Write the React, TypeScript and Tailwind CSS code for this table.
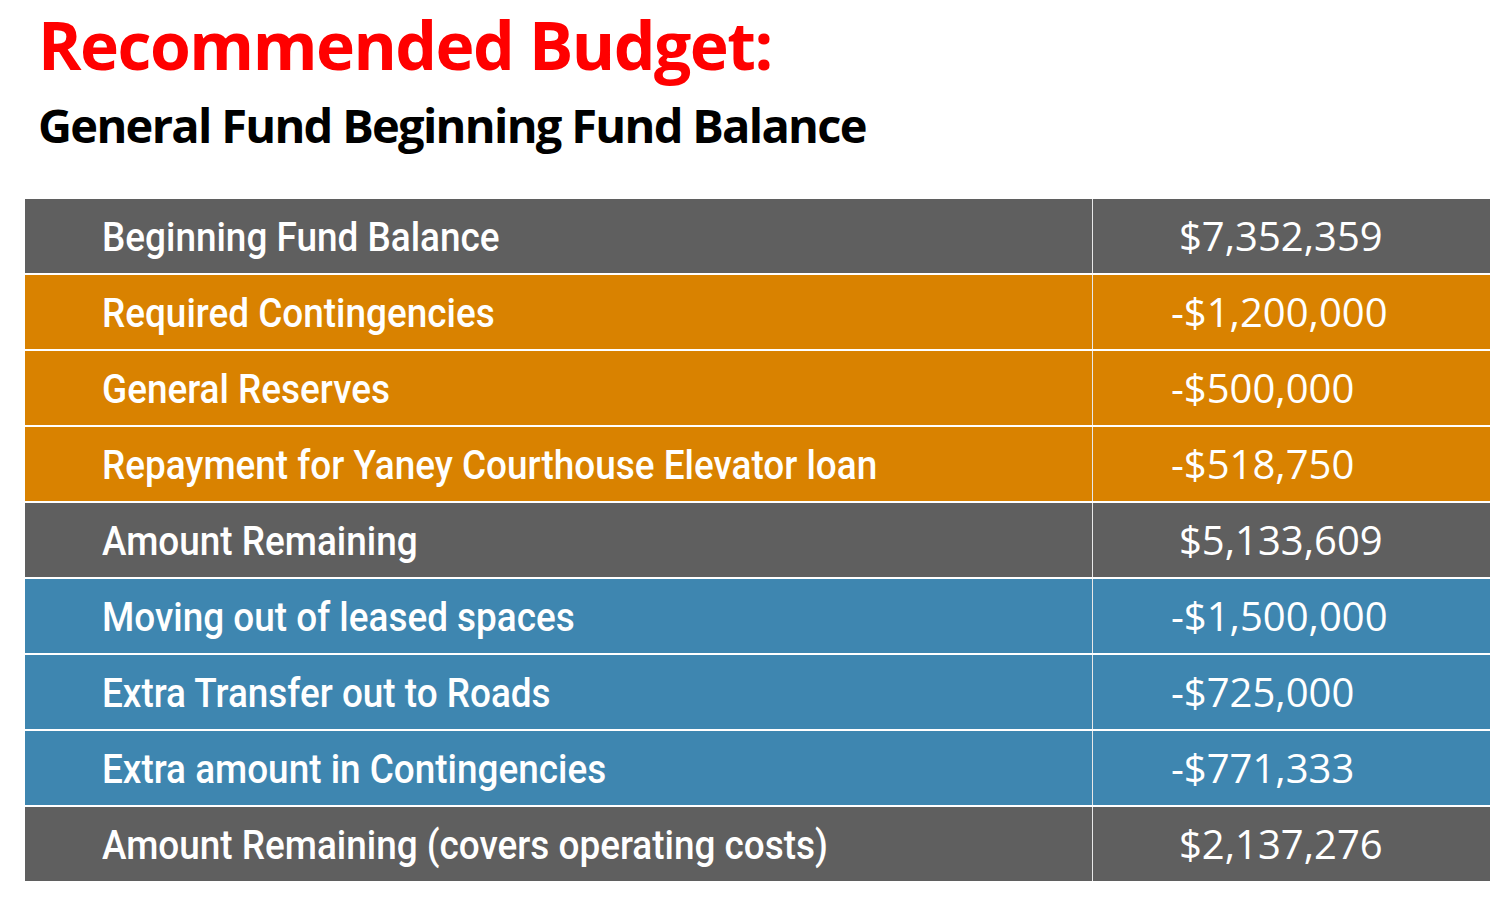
const rows = [
  { label: 'Beginning Fund Balance', value: '$7,352,359', tone: 'gray' },
  { label: 'Required Contingencies', value: '-$1,200,000', tone: 'orange' },
  { label: 'General Reserves', value: '-$500,000', tone: 'orange' },
  { label: 'Repayment for Yaney Courthouse Elevator loan', value: '-$518,750', tone: 'orange' },
  { label: 'Amount Remaining', value: '$5,133,609', tone: 'gray' },
  { label: 'Moving out of leased spaces', value: '-$1,500,000', tone: 'blue' },
  { label: 'Extra Transfer out to Roads', value: '-$725,000', tone: 'blue' },
  { label: 'Extra amount in Contingencies', value: '-$771,333', tone: 'blue' },
  { label: 'Amount Remaining (covers operating costs)', value: '$2,137,276', tone: 'gray' },
];

const toneClass: Record<string, string> = {
  gray: 'bg-[#5f5f5f]',
  orange: 'bg-[#d98200]',
  blue: 'bg-[#3e86b0]',
};

export default function App() {
  return (
    <div className="w-[1509px] h-[900px] bg-white overflow-hidden">
      <div className="pl-[38px]">
        <h1 className="text-[#ff0000] font-bold text-[66px] leading-[88px] tracking-[-1.5px] font-['Open_Sans',sans-serif]">
          Recommended Budget:
        </h1>
        <h2 className="text-black font-bold text-[47px] leading-[56px] mt-[9px] tracking-[-1.7px] font-['Open_Sans',sans-serif]">
          General Fund Beginning Fund Balance
        </h2>
      </div>

      <div className="ml-[25px] mt-[46px] w-[1465px] flex flex-col gap-[2px]">
        {rows.map((row) => (
          <div key={row.label} className={`grid grid-cols-[1068px_1fr] h-[74px] ${toneClass[row.tone]}`}>
            <div className="flex items-center pl-[77px] pt-[3px] border-r border-[#e8e8e8] text-white text-[41px] font-medium font-['Roboto',sans-serif]">
              {/* the slide uses a condensed face; Roboto is squeezed to match */}
              <span className="inline-block whitespace-nowrap origin-left scale-x-[0.9]">{row.label}</span>
            </div>
            <div
              className={`flex items-center text-white text-[40px] font-['Open_Sans',sans-serif] ${
                row.value.startsWith('-') ? 'pl-[78px]' : 'pl-[86px]'
              }`}
            >
              {row.value}
            </div>
          </div>
        ))}
      </div>
    </div>
  );
}
